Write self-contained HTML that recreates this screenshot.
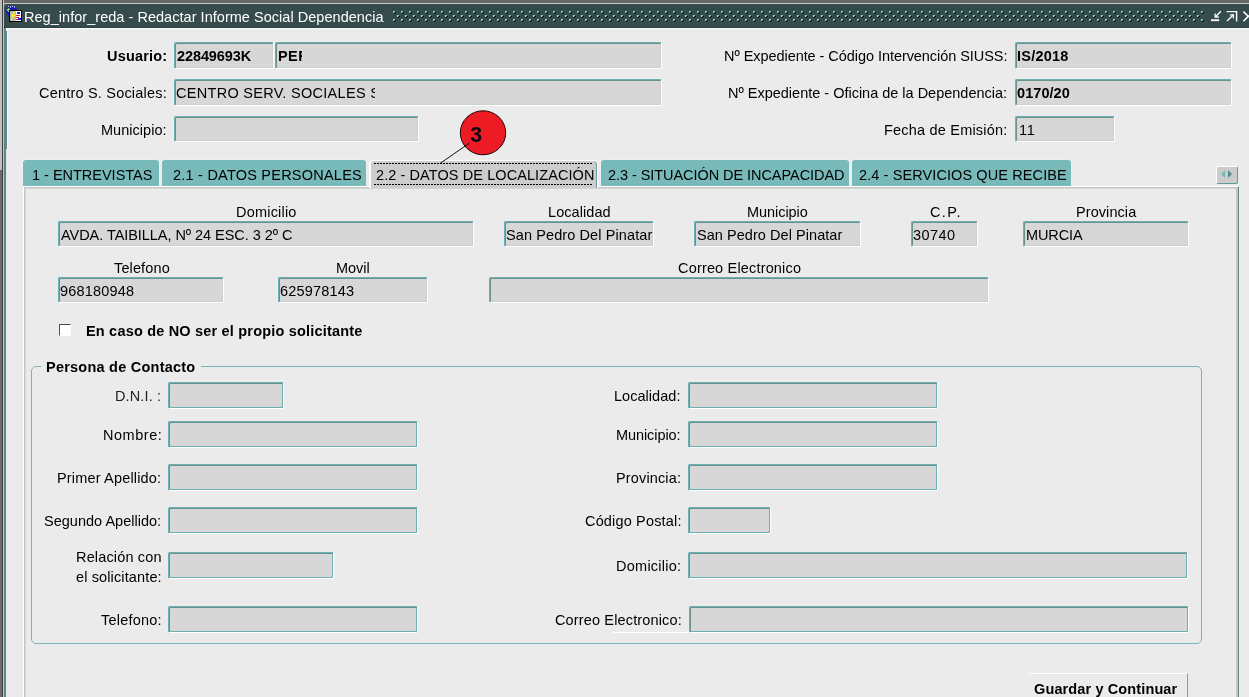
<!DOCTYPE html>
<html lang="es"><head><meta charset="utf-8"><title>Reg_infor_reda - Redactar Informe Social Dependencia</title>
<style>
html,body{margin:0;padding:0}
body{width:1249px;height:697px;overflow:hidden;background:#ebebeb;position:relative;font-family:"Liberation Sans",Arial,sans-serif;font-size:14.5px;color:#000}
#w{position:absolute;left:0;top:0;width:1249px;height:697px;overflow:hidden;will-change:transform}
.a{position:absolute}
.t{position:absolute;white-space:nowrap;line-height:17px;height:17px;transform:scaleY(1.07);transform-origin:0 13px}
.b{font-weight:bold}
.f,.g{position:absolute;box-sizing:border-box;background:#d7d7d7;border-top:1px solid #6ab2b2;border-left:1px solid #6ab2b2;border-right:1px solid #fff;border-bottom:1px solid #fff;border-radius:2px}
.f{box-shadow:inset 1px 1px 0 #6a9090,inset -1px -1px 0 #cfcfcf}
.g{box-shadow:inset 1px 1px 0 #6a9090,inset -1px -1px 0 #6ab0b0}
.tab{position:absolute;top:160px;height:26px;box-sizing:border-box;background:#78baba;border-radius:3px 3px 0 0;box-shadow:-1px -1px 0 #f2eeee,1px -1px 0 #f2eeee}
</style></head>
<body>
<div id="w">
<div class="a" style="left:0;top:0;width:1249px;height:3px;background:#696969"></div>
<div class="a" style="left:0;top:3px;width:1249px;height:1px;background:#c8c8c8"></div>
<div class="a" style="left:0;top:0;width:2px;height:170px;background:#c0c0c0"></div>
<div class="a" style="left:0;top:170px;width:2px;height:527px;background:#6a6a6a"></div>
<div class="a" style="left:2px;top:0;width:1px;height:697px;background:#404040"></div>
<div class="a" style="left:3px;top:0;width:1px;height:697px;background:#c4c4c4"></div>
<div class="a" style="left:4px;top:4px;width:2px;height:693px;background:#5f8787"></div>
<div class="a" style="left:6px;top:4px;width:1px;height:145px;background:#5f8787"></div>
<div class="a" style="left:6px;top:149px;width:1px;height:548px;background:#e2e7e7"></div>
<div class="a" style="left:7px;top:28px;width:1px;height:121px;background:#f6f6f6"></div>
<div class="a" style="left:6px;top:28px;width:1243px;height:1px;background:#fafafa"></div>
<div class="a" style="left:6px;top:28px;width:2px;height:3px;background:#fafafa"></div>
<div class="a" style="left:4px;top:4px;width:1245px;height:24px;background:#364b4c;border-radius:4px 0 0 0"></div>
<div class="a" style="left:4px;top:27px;width:1245px;height:1px;background:#2b4344"></div>
<div id="t0" class="t" style="left:24.00px;top:9px;letter-spacing:0.033px;color:#fff;">Reg_infor_reda - Redactar Informe Social Dependencia</div>
<svg class="a" style="left:393px;top:11px" width="812" height="11" shape-rendering="crispEdges"><defs><pattern id="dp" x="0" y="0" width="8" height="8" patternUnits="userSpaceOnUse"><rect x="0" y="0" width="2" height="2" fill="#7fd2d2"/><rect x="2" y="1" width="1" height="1" fill="#000"/><rect x="1" y="2" width="1" height="1" fill="#000"/><rect x="1" y="1" width="1" height="1" fill="#3c7070"/><rect x="4" y="4" width="2" height="2" fill="#7fd2d2"/><rect x="6" y="5" width="1" height="1" fill="#000"/><rect x="5" y="6" width="1" height="1" fill="#000"/><rect x="5" y="5" width="1" height="1" fill="#3c7070"/></pattern></defs><rect width="812" height="11" fill="url(#dp)"/></svg>
<svg class="a" style="left:1208px;top:8px" width="41" height="16" fill="none" stroke="#fff" stroke-width="1.3"><path d="M3 12.2 H11.2" stroke-width="1.8"/><path d="M13 3.2 L7.2 9" /><path d="M7.2 5.6 V9 H10.8"/><path d="M18.6 3.6 H28.6 V13.4" stroke-width="1.4"/><path d="M19 13 L25.4 6.8"/><path d="M21.8 6.8 H25.4 V10.6"/><path d="M35.4 3.6 L41 9 M35.4 13.2 L41 7.6" stroke-width="1.6"/></svg>
<svg class="a" style="left:6px;top:5px" width="17" height="18" shape-rendering="crispEdges"><circle cx="6" cy="6.5" r="5.6" fill="#1a1ab0" shape-rendering="auto"/><path d="M1 4 L3 2 L4 5 L2 8 Z" fill="#7fc99a"/><rect x="2" y="1" width="1" height="1" fill="#c8c8ff"/><rect x="4" y="1" width="1" height="2" fill="#b0b0ff"/><rect x="6" y="1" width="1" height="1" fill="#c8c8ff"/><rect x="8" y="1" width="1" height="2" fill="#9a9aff"/><rect x="3" y="5" width="13" height="12" fill="#000"/><rect x="4" y="6" width="11" height="10" fill="#fff"/><rect x="4" y="6" width="6" height="10" fill="#b8b8b8"/><path d="M8.5 6.5 L5 11.5 L7.5 11.5 L5 15.5 L9.5 10 L7 10 L9.5 6.5 Z" fill="#ffee00" stroke="#ffee00" stroke-width="0.6" shape-rendering="auto"/><rect x="11" y="7" width="3" height="2" fill="#1a1ae0"/><rect x="10" y="10" width="4" height="1" fill="#e01a1a"/><rect x="10" y="12" width="3" height="1" fill="#e01a1a"/><rect x="10" y="14" width="2" height="1" fill="#e01a1a"/><rect x="12" y="13" width="3" height="2" fill="#1a1ae0"/></svg>
<div class="f" style="left:174px;top:42px;width:100px;height:27px"></div>
<div class="f" style="left:275px;top:42px;width:387px;height:27px"></div>
<div class="f" style="left:174px;top:79px;width:488px;height:27px"></div>
<div class="f" style="left:174px;top:116px;width:245px;height:26px"></div>
<div class="f" style="left:1015px;top:42px;width:217px;height:27px"></div>
<div class="f" style="left:1015px;top:79px;width:217px;height:27px"></div>
<div class="f" style="left:1015px;top:116px;width:100px;height:26px"></div>
<div id="t1" class="t b" style="left:107.00px;top:48px;letter-spacing:0.186px;">Usuario:</div>
<div id="t2" class="t b" style="left:177.00px;top:48px;letter-spacing:-0.100px;">22849693K</div>
<div id="t3" class="t b" style="left:278.00px;top:48px;letter-spacing:0.400px;width:24.20px;overflow:hidden;">PER</div>
<div id="t4" class="t" style="left:39.00px;top:85px;letter-spacing:0.200px;">Centro S. Sociales:</div>
<div id="t5" class="t" style="left:176.00px;top:85px;letter-spacing:0.291px;width:199.40px;overflow:hidden;">CENTRO SERV. SOCIALES S</div>
<div id="t6" class="t" style="left:101.00px;top:122px;letter-spacing:0.033px;">Municipio:</div>
<div id="t7" class="t" style="left:724.00px;top:48px;letter-spacing:-0.056px;">Nº Expediente - Código Intervención SIUSS:</div>
<div id="t8" class="t b" style="left:1017.00px;top:48px;letter-spacing:0.233px;">IS/2018</div>
<div id="t9" class="t" style="left:728.00px;top:85px;letter-spacing:-0.007px;">Nº Expediente - Oficina de la Dependencia:</div>
<div id="t10" class="t b" style="left:1017.00px;top:85px;letter-spacing:0.067px;">0170/20</div>
<div id="t11" class="t" style="left:884.00px;top:122px;letter-spacing:0.200px;">Fecha de Emisión:</div>
<div id="t12" class="t" style="left:1019.00px;top:122px;letter-spacing:0.700px;">11</div>
<div class="a" style="left:23px;top:186px;width:1216px;height:520px;box-sizing:border-box;border-top:1px solid #fff;border-left:1px solid #fff;border-right:1px solid #5f8a8a;box-shadow:inset 1px 1px 0 #c6c6c6,inset -2px 0 0 #c4c4c4,inset 2px 2px 0 #d6d6d6"></div>
<div class="tab" style="left:23px;width:136px"></div>
<div id="t13" class="t" style="left:32.00px;top:167px;letter-spacing:-0.014px;">1 - ENTREVISTAS</div>
<div class="tab" style="left:162px;width:204px"></div>
<div id="t14" class="t" style="left:173.00px;top:167px;letter-spacing:0.224px;">2.1 - DATOS PERSONALES</div>
<div class="a" style="left:369px;top:160px;width:229px;height:28px;box-sizing:border-box;background:#cdcdcd;border-radius:4px 4px 0 0;border-left:2px solid #fff;border-top:1px solid #fff;border-right:1px solid #fff;box-shadow:inset -1px 0 0 #6a9a9a"></div>
<svg class="a" style="left:374px;top:163px" width="219" height="22" shape-rendering="crispEdges"><path d="M0 0.5 H219 M0 21.5 H219" fill="none" stroke="#000" stroke-width="1" stroke-dasharray="2 1"/></svg>
<div id="t15" class="t" style="left:376.00px;top:167px;letter-spacing:0.085px;">2.2 - DATOS DE LOCALIZACIÓN</div>
<div class="tab" style="left:601px;width:248px"></div>
<div id="t16" class="t" style="left:608.00px;top:167px;letter-spacing:-0.059px;">2.3 - SITUACIÓN DE INCAPACIDAD</div>
<div class="tab" style="left:852px;width:219px"></div>
<div id="t17" class="t" style="left:859.00px;top:167px;letter-spacing:0.100px;">2.4 - SERVICIOS QUE RECIBE</div>
<div class="a" style="left:1216px;top:166px;width:22px;height:18px;box-sizing:border-box;background:#ccc;border-top:1px solid #fff;border-left:1px solid #fff;border-right:1px solid #5f9a9a;border-bottom:1px solid #5f9a9a;border-radius:2px"></div>
<svg class="a" style="left:1216px;top:166px" width="22" height="18"><path d="M9 4 L9 12 L5 8 Z" fill="#6fbaba"/><path d="M12 4 L12 12 L16 8 Z" fill="#5a8a8a"/></svg>
<svg class="a" style="left:430px;top:105px" width="90" height="65"><ellipse cx="53" cy="27.8" rx="22.7" ry="22" fill="#ed1c24" stroke="#1a0505" stroke-width="1"/><line x1="10" y1="58.5" x2="39.5" y2="38" stroke="#111" stroke-width="1"/><text transform="translate(40.2,36.6) scale(0.95,1)" font-family="Liberation Sans,sans-serif" font-weight="bold" font-size="22.5" fill="#0a0a14">3</text></svg>
<div class="f" style="left:58px;top:221px;width:416px;height:26px"></div>
<div class="f" style="left:504px;top:221px;width:150px;height:26px"></div>
<div class="f" style="left:694px;top:221px;width:167px;height:26px"></div>
<div class="f" style="left:911px;top:221px;width:67px;height:26px"></div>
<div class="f" style="left:1023px;top:221px;width:166px;height:26px"></div>
<div id="t18" class="t" style="left:236.00px;top:204px;letter-spacing:0.200px;">Domicilio</div>
<div id="t19" class="t" style="left:548.00px;top:204px;letter-spacing:0.075px;">Localidad</div>
<div id="t20" class="t" style="left:747.00px;top:204px;letter-spacing:-0.050px;">Municipio</div>
<div id="t21" class="t" style="left:930.00px;top:204px;letter-spacing:1.367px;">C.P.</div>
<div id="t22" class="t" style="left:1076.00px;top:204px;letter-spacing:0.075px;">Provincia</div>
<div id="t23" class="t" style="left:61.00px;top:227px;letter-spacing:-0.050px;">AVDA. TAIBILLA, Nº 24 ESC. 3 2º C</div>
<div id="t24" class="t" style="left:506.00px;top:227px;letter-spacing:0.100px;">San Pedro Del Pinatar</div>
<div id="t25" class="t" style="left:697.00px;top:227px;letter-spacing:0.050px;">San Pedro Del Pinatar</div>
<div id="t26" class="t" style="left:913.00px;top:227px;letter-spacing:0.450px;">30740</div>
<div id="t27" class="t" style="left:1026.00px;top:227px;letter-spacing:-0.100px;">MURCIA</div>
<div class="f" style="left:58px;top:277px;width:166px;height:26px"></div>
<div class="f" style="left:278px;top:277px;width:150px;height:26px"></div>
<div class="f" style="left:489px;top:277px;width:500px;height:26px"></div>
<div id="t28" class="t" style="left:114.00px;top:260px;letter-spacing:0.129px;">Telefono</div>
<div id="t29" class="t" style="left:336.00px;top:260px;letter-spacing:-0.050px;">Movil</div>
<div id="t30" class="t" style="left:678.00px;top:260px;letter-spacing:0.171px;">Correo Electronico</div>
<div id="t31" class="t" style="left:60.00px;top:283px;letter-spacing:0.200px;">968180948</div>
<div id="t32" class="t" style="left:280.00px;top:283px;letter-spacing:0.200px;">625978143</div>
<div class="a" style="left:59px;top:324px;width:12px;height:12px;box-sizing:border-box;background:#fff;border-top:1px solid #3a5555;border-left:1px solid #3a5555;border-right:1px solid #fff;border-bottom:1px solid #fff"></div>
<div id="t33" class="t b" style="left:86.00px;top:323px;letter-spacing:0.189px;">En caso de NO ser el propio solicitante</div>
<div class="a" style="left:31px;top:366px;width:1171px;height:278px;box-sizing:border-box;border:1px solid #7ab5b5;border-radius:5px"></div>
<div class="a" style="left:41px;top:360px;width:160px;height:14px;background:#ebebeb"></div>
<div id="t34" class="t b" style="left:46.00px;top:359px;letter-spacing:0.233px;">Persona de Contacto</div>
<div class="g" style="left:168px;top:382px;width:116px;height:27px"></div>
<div class="g" style="left:168px;top:421px;width:250px;height:27px"></div>
<div class="g" style="left:168px;top:464px;width:250px;height:27px"></div>
<div class="g" style="left:168px;top:507px;width:250px;height:27px"></div>
<div class="g" style="left:168px;top:552px;width:166px;height:27px"></div>
<div class="g" style="left:168px;top:606px;width:250px;height:27px"></div>
<div class="g" style="left:688px;top:382px;width:250px;height:27px"></div>
<div class="g" style="left:688px;top:421px;width:250px;height:27px"></div>
<div class="g" style="left:688px;top:464px;width:250px;height:27px"></div>
<div class="g" style="left:688px;top:507px;width:83px;height:27px"></div>
<div class="g" style="left:688px;top:552px;width:500px;height:27px"></div>
<div class="g" style="left:689px;top:606px;width:500px;height:27px"></div>
<div id="t35" class="t" style="left:115.00px;top:388px;letter-spacing:0.129px;color:#222;">D.N.I. :</div>
<div id="t36" class="t" style="left:103.00px;top:427px;letter-spacing:0.533px;">Nombre:</div>
<div id="t37" class="t" style="left:57.00px;top:470px;letter-spacing:0.167px;">Primer Apellido:</div>
<div id="t38" class="t" style="left:44.00px;top:513px;letter-spacing:0.013px;">Segundo Apellido:</div>
<div id="t39" class="t" style="left:76.00px;top:549px;letter-spacing:0.155px;">Relación con</div>
<div id="t40" class="t" style="left:76.00px;top:569px;letter-spacing:0.129px;">el solicitante:</div>
<div id="t41" class="t" style="left:101.00px;top:612px;letter-spacing:0.200px;">Telefono:</div>
<div id="t42" class="t" style="left:614.00px;top:388px;letter-spacing:0.033px;">Localidad:</div>
<div id="t43" class="t" style="left:616.00px;top:427px;letter-spacing:-0.078px;">Municipio:</div>
<div id="t44" class="t" style="left:616.00px;top:470px;letter-spacing:0.144px;">Provincia:</div>
<div id="t45" class="t" style="left:585.00px;top:513px;letter-spacing:0.162px;">Código Postal:</div>
<div id="t46" class="t" style="left:616.00px;top:558px;letter-spacing:0.256px;">Domicilio:</div>
<div id="t47" class="t" style="left:555.00px;top:612px;letter-spacing:0.144px;">Correo Electronico:</div>
<div class="a" style="left:613px;top:632px;width:76px;height:1px;background:#fff"></div>
<div class="a" style="left:1029px;top:673px;width:159px;height:40px;box-sizing:border-box;border-top:1px solid #fff;border-right:1px solid #6aa9a9"></div>
<div id="t48" class="t b" style="left:1034.00px;top:681px;letter-spacing:0.122px;">Guardar y Continuar</div>
</div>
</body></html>
